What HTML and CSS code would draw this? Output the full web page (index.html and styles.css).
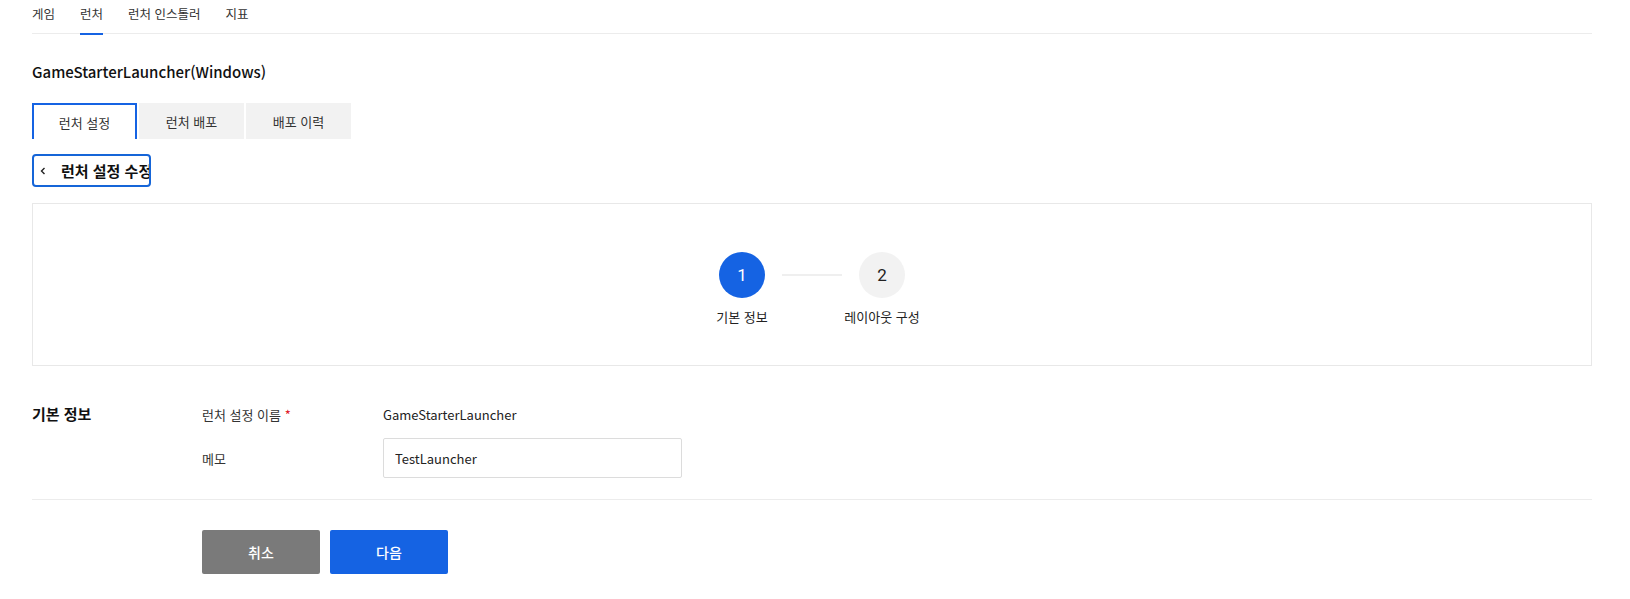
FILE: index.html
```html
<!DOCTYPE html>
<html lang="ko">
<head>
<meta charset="utf-8">
<title>런처 설정 수정</title>
<link rel="stylesheet" href="styles.css">
</head>
<body>
<div class="page">
  <nav class="topnav">
    <a class="topnav-item">게임</a>
    <a class="topnav-item is-active">런처</a>
    <a class="topnav-item">런처 인스톨러</a>
    <a class="topnav-item">지표</a>
  </nav>

  <h1 class="page-title">GameStarterLauncher(Windows)</h1>

  <div class="tabs">
    <button class="tab is-active">런처 설정</button>
    <button class="tab">런처 배포</button>
    <button class="tab">배포 이력</button>
  </div>

  <button class="back-btn">
    <svg class="back-icon" width="6" height="8" viewBox="0 0 6 8"><path d="M4.5 1 L1.5 4 L4.5 7" fill="none" stroke="#222" stroke-width="1.4"/></svg>
    <span class="back-text">런처 설정 수정</span>
  </button>

  <div class="stepper">
    <div class="step is-current">
      <div class="step-circle">1</div>
      <div class="step-label">기본 정보</div>
    </div>
    <div class="step-line"></div>
    <div class="step">
      <div class="step-circle">2</div>
      <div class="step-label">레이아웃 구성</div>
    </div>
  </div>

  <section class="form">
    <h2 class="form-title">기본 정보</h2>
    <div class="form-rows">
      <div class="form-row">
        <div class="form-label">런처 설정 이름 <span class="req">*</span></div>
        <div class="form-value">GameStarterLauncher</div>
      </div>
      <div class="form-row">
        <div class="form-label">메모</div>
        <div class="form-value"><input class="text-input" type="text" value="TestLauncher"></div>
      </div>
    </div>
  </section>

  <div class="actions">
    <button class="btn btn-cancel">취소</button>
    <button class="btn btn-next">다음</button>
  </div>
</div>
</body>
</html>
```

FILE: styles.css
```css
* { box-sizing: border-box; }
html, body { margin: 0; padding: 0; background: #fff; }
body {
  font-family: "Noto Sans CJK KR", "Noto Sans", sans-serif;
  color: #222;
  font-size: 14px;
}
.page {
  width: 1560px;
  margin-left: 32px;
}
.topnav {
  display: flex;
  gap: 25px;
  border-bottom: 1px solid #ececec;
  height: 34px;
}
.topnav-item {
  font-size: 12.5px;
  line-height: 20px;
  padding-top: 4px;
  height: 34px;
  color: #333;
  cursor: pointer;
}
.topnav-item.is-active {
  border-bottom: 2px solid #1563e3;
  height: 35px;
}
.page-title {
  margin: 26px 0 0;
  font-size: 15px;
  font-weight: 500;
  line-height: 24px;
  color: #111;
}
.tabs {
  display: flex;
  gap: 2px;
  margin-top: 19px;
}
.tab {
  width: 105px;
  height: 36px;
  border: 0;
  background: #f2f2f2;
  font-family: inherit;
  font-size: 13px;
  color: #333;
  padding: 0;
}
.tab.is-active {
  background: #fff;
  border: 2px solid #1563e3;
  border-bottom: 0;
}
.back-btn {
  display: flex;
  align-items: center;
  margin-top: 15px;
  width: 119px;
  height: 33px;
  border: 2px solid #1565d8;
  border-radius: 4px;
  background: #fff;
  padding: 0 0 0 6px;
  overflow: hidden;
  white-space: nowrap;
  font-family: inherit;
}
.back-icon { flex: none; }
.back-text {
  margin-left: 15px;
  font-size: 15px;
  font-weight: 700;
  color: #111;
}
.stepper {
  margin-top: 16px;
  height: 163px;
  border: 1px solid #e8e8e8;
  display: flex;
  justify-content: center;
  align-items: flex-start;
  padding-top: 48px;
}
.step {
  width: 100px;
  display: flex;
  flex-direction: column;
  align-items: center;
}
.step-circle {
  width: 46px;
  height: 46px;
  border-radius: 50%;
  background: #f2f2f2;
  color: #222;
  font-family: Roboto, "Noto Sans", sans-serif;
  font-size: 17px;
  display: flex;
  align-items: center;
  justify-content: center;
}
.step.is-current .step-circle {
  background: #1563e3;
  color: #fff;
}
.step-label {
  margin-top: 9px;
  font-size: 13px;
  line-height: 20px;
  color: #222;
}
.step-line {
  width: 60px;
  height: 2px;
  background: #efefef;
  margin: 22px -10px 0;
}
.form {
  display: flex;
  margin-top: 28px;
  padding-bottom: 21px;
  border-bottom: 1px solid #ececec;
}
.form-title {
  width: 170px;
  margin: 0;
  font-size: 15px;
  font-weight: 700;
  line-height: 40px;
  height: 40px;
  color: #111;
}
.form-rows {
  display: flex;
  flex-direction: column;
  gap: 4px;
}
.form-row {
  display: flex;
  align-items: center;
  min-height: 40px;
}
.form-label {
  width: 181px;
  font-size: 13px;
  color: #333;
}
.req { color: #e0202a; }
.form-value {
  font-size: 13px;
  color: #222;
}
.text-input {
  width: 299px;
  height: 40px;
  border: 1px solid #dcdcdc;
  border-radius: 2px;
  padding: 0 11px;
  font-family: inherit;
  font-size: 13px;
  color: #222;
  outline: none;
}
.actions {
  display: flex;
  gap: 10px;
  margin-top: 30px;
  padding-left: 170px;
}
.btn {
  width: 118px;
  height: 44px;
  border: 0;
  border-radius: 2px;
  color: #fff;
  font-family: inherit;
  font-size: 14px;
  font-weight: 500;
}
.btn-cancel { background: #7a7a7a; }
.btn-next { background: #1563e3; }
```
